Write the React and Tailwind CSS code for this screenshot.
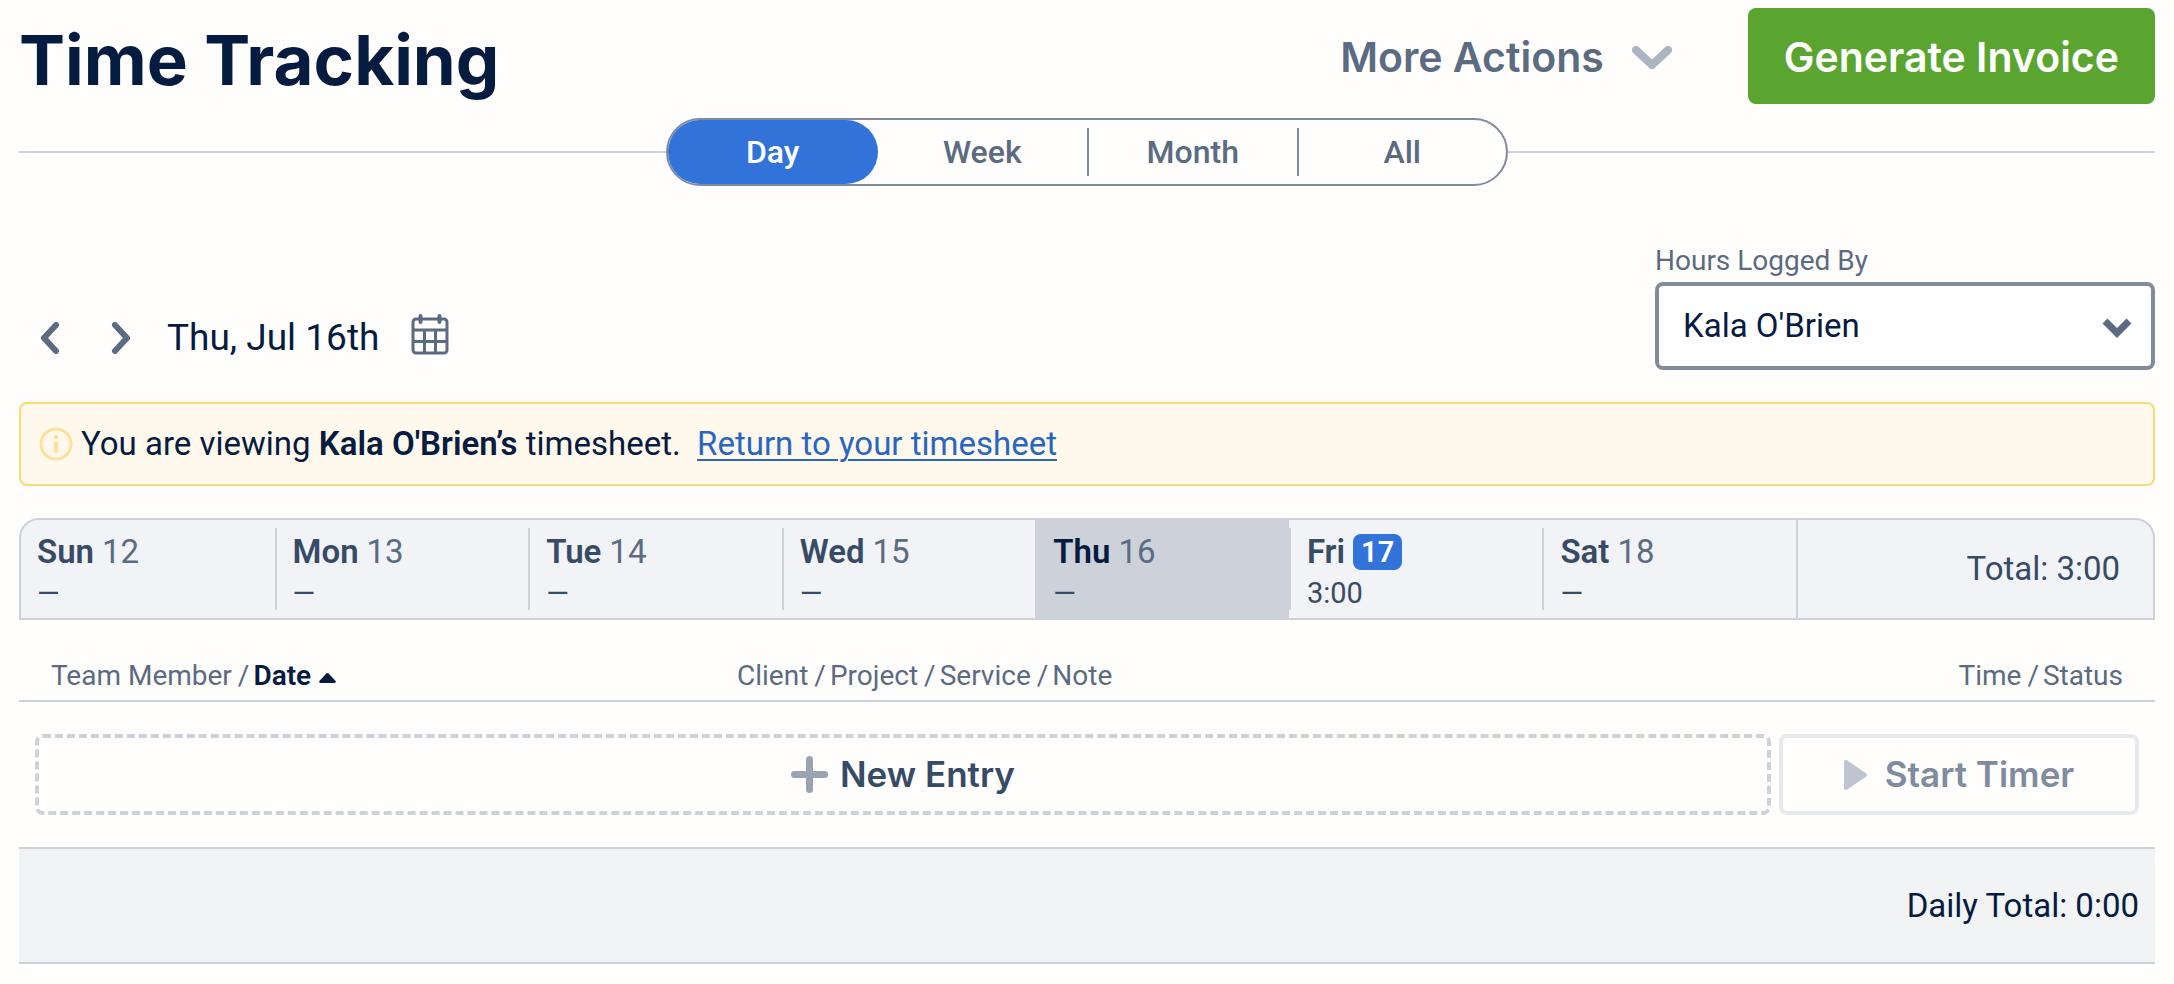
import React, { useState } from 'react'

const views = ['Day', 'Week', 'Month', 'All']

const weekDays = [
  { name: 'Sun', date: 12, hours: '—' },
  { name: 'Mon', date: 13, hours: '—' },
  { name: 'Tue', date: 14, hours: '—' },
  { name: 'Wed', date: 15, hours: '—' },
  { name: 'Thu', date: 16, hours: '—' },
  { name: 'Fri', date: 17, hours: '3:00', today: true },
  { name: 'Sat', date: 18, hours: '—' },
]

const Chevron = ({ className, d, viewBox, strokeWidth = 8, linecap = 'round' }) => (
  <svg className={className} viewBox={viewBox} fill="none" stroke="currentColor" strokeWidth={strokeWidth} strokeLinecap={linecap} strokeLinejoin={linecap === 'round' ? 'round' : 'miter'} aria-hidden="true">
    <path d={d} />
  </svg>
)

const CalendarIcon = () => (
  <svg className="w-[38px] h-[41px]" viewBox="0 0 38 41" fill="none" stroke="currentColor" strokeWidth="3" aria-hidden="true">
    <rect x="2" y="5" width="34" height="34" rx="3" />
    <path d="M2 16h34M2 27.5h34M13.5 16v23M24.5 16v23" />
    <path d="M9.5 2v6M28.5 2v6" strokeWidth="4" strokeLinecap="round" />
  </svg>
)

const Header = () => (
  <header className="flex items-start justify-between pt-2">
    <h1 className="font-['Inter'] font-bold text-[69px] leading-[104px] text-[#051b40]">Time Tracking</h1>
    <div className="flex items-center gap-[76px]">
      <button className="flex items-center gap-7 pt-1 font-['Inter'] font-semibold text-[41px] text-[#5b6b82]">
        More Actions
        <Chevron className="w-10 h-6 text-[#adb4c1]" viewBox="0 0 40 24" d="M4 4l16 15L36 4" />
      </button>
      <button className="h-24 px-9 pt-1 rounded-lg bg-[#5aa52f] font-['Inter'] font-semibold text-[41px] text-white">
        Generate Invoice
      </button>
    </div>
  </header>
)

const ViewSwitcher = ({ view, setView }) => (
  <div className="flex items-center mt-1.5">
    <div className="grow h-0.5 bg-[#cdd1db]" />
    <div className="flex w-[842px] h-[68px] border-2 border-[#808ba0] rounded-full">
      {views.map((item, i) => (
        <div key={item} className="flex flex-1 items-center">
          {i > 1 && <div className="w-0.5 h-12 shrink-0 bg-[#808ba0]" />}
          <button
            onClick={() => setView(item)}
            className={`w-full h-full text-[32px] font-medium ${view === item ? 'rounded-full bg-[#3173d8] text-white' : 'text-[#5b6b82]'}`}
          >
            {item}
          </button>
        </div>
      ))}
    </div>
    <div className="grow h-0.5 bg-[#cdd1db]" />
  </div>
)

const Toolbar = () => (
  <div className="flex items-end justify-between mt-[54px]">
    <div className="flex items-center pl-[21px] pb-2 text-[#5b6b82]">
      <button aria-label="Previous day" className="mr-[51px]">
        <Chevron className="w-5 h-8" viewBox="0 0 20 32" strokeWidth="6" d="M16 3L4 16l12 13" />
      </button>
      <button aria-label="Next day" className="mr-9">
        <Chevron className="w-5 h-8" viewBox="0 0 20 32" strokeWidth="6" d="M4 3l12 13L4 29" />
      </button>
      <span className="mr-8 text-[37px] leading-[48px] text-[#051b40]">Thu, Jul 16th</span>
      <button aria-label="Pick a date" className="self-start">
        <CalendarIcon />
      </button>
    </div>
    <div className="w-[500px]">
      <label htmlFor="logged-by" className="block text-[28px] leading-[42px] text-[#5b6b82]">Hours Logged By</label>
      <div className="relative">
        <select id="logged-by" className="block w-full h-[88px] pl-6 border-4 border-[#808b9c] rounded-lg bg-white appearance-none text-[33px] text-[#051b40]">
          <option>Kala O'Brien</option>
        </select>
        <Chevron className="absolute right-[23px] top-9 w-[30px] h-5 text-[#5b6b82] pointer-events-none" viewBox="0 0 30 20" strokeWidth="7" linecap="butt" d="M3 3l12 12L27 3" />
      </div>
    </div>
  </div>
)

const Notice = () => (
  <div className="flex items-center h-[84px] mt-8 pl-[18px] border-2 border-[#fbda75] rounded-lg bg-[#fff8ec] text-[33px] text-[#051b40]">
    <svg className="w-[34px] h-[34px] mr-2" viewBox="0 0 34 34" aria-hidden="true">
      <circle cx="17" cy="17" r="15" fill="none" stroke="#fde09b" strokeWidth="3" />
      <circle cx="17" cy="10" r="2.3" fill="#fde09b" />
      <path d="M17 16.5v7.5" stroke="#fde09b" strokeWidth="4" strokeLinecap="round" />
    </svg>
    <p>
      You are viewing <b className="font-semibold">Kala O'Brien’s</b> timesheet.&nbsp;{' '}
      <a href="#" className="text-[#2a66c0] underline underline-offset-4 decoration-2">Return to your timesheet</a>
    </p>
  </div>
)

const WeekStrip = ({ selected, setSelected }) => (
  <div className="flex h-[102px] mt-8 border-2 border-[#cdd1d9] rounded-t-[20px] bg-[#f1f3f6] overflow-hidden text-[#5b6b82]">
    {weekDays.map((day, i) => {
      const active = selected === day.date
      return (
        <div key={day.name} className={`flex grow basis-0 items-center ${active ? 'bg-[#cdd1d9]' : ''}`}>
          {i > 0 && <div className="w-0.5 h-[82px] bg-[#cdd1d9]" />}
          <button onClick={() => setSelected(day.date)} className="grow pl-4 pt-2 text-left">
            <span className="flex items-center gap-2 h-10 text-[33px]">
              <span className={`font-semibold ${active ? 'text-[#051b40]' : 'text-[#374a66]'}`}>{day.name}</span>
              {day.today ? (
                <span className="px-2 rounded-lg bg-[#3173d8] font-semibold text-[29px] leading-9 text-white">{day.date}</span>
              ) : (
                <span>{day.date}</span>
              )}
            </span>
            <span className="block text-[29px] leading-[42px] text-[#374a66]">{day.hours}</span>
          </button>
        </div>
      )
    })}
    <div className="flex items-center justify-end w-[357px] pr-[33px] border-l-2 border-[#cdd1d9] text-[33px] text-[#374a66]">Total: 3:00</div>
  </div>
)

const Slash = () => <span className="ml-1.5 mr-1">/</span>

const Entries = () => (
  <table className="w-full mt-8 border-collapse table-fixed">
    <thead>
      <tr className="h-[49px] border-b-2 border-[#cdd1db] text-left text-[28px] leading-9 text-[#5b6b82]">
        <th className="w-1/3 pl-8 font-normal">
          Team Member<Slash /><b className="font-semibold text-[#051b40]">Date</b>
          <svg className="inline ml-2 w-[17px] h-[10px] align-middle" viewBox="0 0 17 10" fill="#051b40" aria-hidden="true">
            <path d="M7.4.6a1.5 1.5 0 012.2 0l6.8 7.2c.8.9.3 2.2-.9 2.2h-14C.3 10-.2 8.700.6 7.800z" />
          </svg>
        </th>
        <th className="pl-1.5 font-normal">Client<Slash />Project<Slash />Service<Slash />Note</th>
        <th className="w-1/4 pr-8 font-normal text-right">Time<Slash />Status</th>
      </tr>
    </thead>
    <tbody>
      <tr>
        <td colSpan={3} className="px-4 py-8">
          <div className="flex gap-2 h-[81px] font-['Inter'] font-semibold text-[35px]">
            <button className="flex grow items-center justify-center gap-3 border-4 border-dashed border-[#cdd1d9] rounded-lg text-[#374a66]">
              <svg className="w-[37px] h-[37px]" viewBox="0 0 37 37" stroke="#9aa3b2" strokeWidth="7" strokeLinecap="round" aria-hidden="true">
                <path d="M18.500 3.500v30M3.500 18.500h30" />
              </svg>
              New Entry
            </button>
            <button className="flex w-[360px] items-center justify-center gap-[17px] border-4 border-[#e6e9ed] rounded-lg text-[#808b9f]">
              <svg className="w-6 h-[30px]" viewBox="0 0 24 30" fill="#bfc5ce" aria-hidden="true">
                <path d="M0 2C0 .3 1.800-.6 3.200.4l19 13c1.200.8 1.200 2.400 0 3.200l-19 13C1.800 30.600 0 29.700 0 28z" />
              </svg>
              Start Timer
            </button>
          </div>
        </td>
      </tr>
    </tbody>
    <tfoot>
      <tr className="h-[115px] border-y-2 border-[#cdd1db] bg-[#f1f3f5]">
        <td colSpan={3} className="pr-4 text-right text-[33px] text-[#051b40]">Daily Total: 0:00</td>
      </tr>
    </tfoot>
  </table>
)

const App = () => {
  const [view, setView] = useState('Day')
  const [selected, setSelected] = useState(16)

  return (
    <main className="min-h-screen px-[19px] bg-[#fffefd] font-['Roboto',sans-serif]">
      <Header />
      <ViewSwitcher view={view} setView={setView} />
      <Toolbar />
      <Notice />
      <WeekStrip selected={selected} setSelected={setSelected} />
      <Entries />
    </main>
  )
}

export default App
